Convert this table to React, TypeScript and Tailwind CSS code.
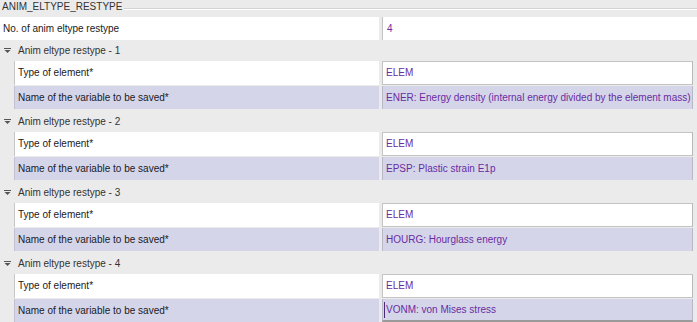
import React from "react";

const groups = [
  { n: 1, val: "ENER: Energy density (internal energy divided by the element mass)" },
  { n: 2, val: "EPSP: Plastic strain E1p" },
  { n: 3, val: "HOURG: Hourglass energy" },
  { n: 4, val: "VONM: von Mises stress" },
];

function Tri() {
  return (
    <svg width="7" height="5" viewBox="0 0 7 5" className="block">
      <rect x="0" y="0" width="7" height="1" fill="#555" />
      <path d="M0.5 2 L6.5 2 L3.5 5 Z" fill="#555" />
    </svg>
  );
}

export default function App() {
  return (
    <div
      className="w-[697px] h-[322px] overflow-hidden bg-[#ecebeb] text-[10px] leading-none"
      style={{ fontFamily: '"Liberation Sans", Arial, sans-serif' }}
    >
      <div className="h-[17px] flex items-start">
        <span className="pl-[2px] pt-[2px] text-[#333]">ANIM_ELTYPE_RESTYPE</span>
        <div className="flex-1 mt-[8px] ml-[2px] border-t border-[#d3d3d3] border-b border-b-white h-[2px]" />
      </div>
      <div className="flex h-[23px]">
        <div className="w-[379px] bg-white flex items-center pl-[3px] text-[#1a1a1a]">
          No. of anim eltype restype
        </div>
        <div className="w-[3px]" />
        <div className="flex-1 bg-white border-l border-[#c4c4c4] flex items-center pl-[4px] text-[#6a2ca0]">
          4
        </div>
      </div>
      {groups.map((g, i) => (
        <div key={g.n} className={i === 0 ? "" : "mt-[2px]"}>
          <div className="h-[21px] flex items-center text-[#333]">
            <div className="w-[18px] pl-[4px]">
              <Tri />
            </div>
            <span>Anim eltype restype - {g.n}</span>
          </div>
          <div className="ml-[14px] flex h-[24px]">
            <div className="w-[365px] bg-white border-l border-[#c6c6c6] flex items-center pl-[3px] text-[#1a1a1a]">
              Type of element*
            </div>
            <div className="w-[3px]" />
            <div className="w-[311px] bg-white border border-[#c4c4c4] border-r-[#b8b8b8] flex items-center pl-[3px] text-[#6a2ca0]">
              ELEM
            </div>
          </div>
          <div className="ml-[14px] mt-[1px] flex h-[23px]">
            <div className="w-[365px] bg-[#d5d5ea] border-l border-[#c0c0d0] flex items-center pl-[3px] text-[#1a1a1a]">
              Name of the variable to be saved*
            </div>
            <div className="w-[3px]" />
            <div
              className={
                "relative w-[311px] bg-[#d5d5ea] border-l border-r border-[#b8b8c8] flex items-center pl-[3px] text-[#6a2ca0] " +
                (i === 3 ? "border-b-2 border-b-[#9a9a9a]" : "")
              }
            >
              {i === 3 && (
                <div className="absolute left-[1px] top-[3px] bottom-[2px] w-[1px] bg-[#4a2a7a]" />
              )}
              {g.val}
            </div>
          </div>
        </div>
      ))}
    </div>
  );
}
